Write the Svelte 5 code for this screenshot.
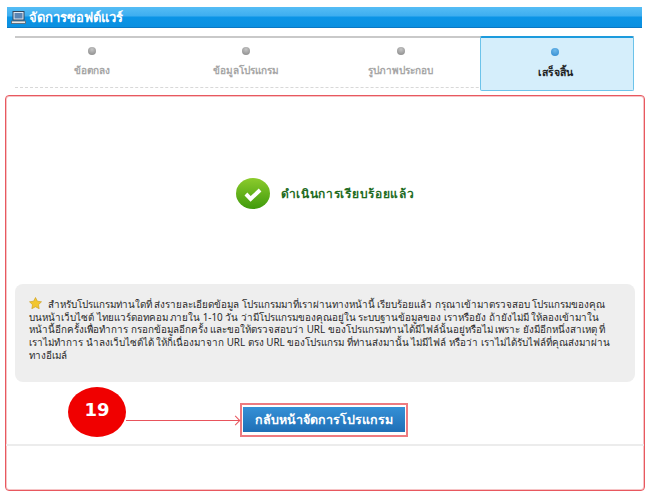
<script>
  const steps = [
    { label: 'ข้อตกลง' },
    { label: 'ข้อมูลโปรแกรม' },
    { label: 'รูปภาพประกอบ' },
    { label: 'เสร็จสิ้น', active: true }
  ];

  const lines = [
    'บนหน้าเว็บไซต์ ไทยแวร์ดอทคอม ภายใน 1-10 วัน ว่ามีโปรแกรมของคุณอยู่ใน ระบบฐานข้อมูลของ เราหรือยัง ถ้ายังไม่มี ให้ลองเข้ามาใน',
    'หน้านี้อีกครั้งเพื่อทำการ กรอกข้อมูลอีกครั้ง และขอให้ตรวจสอบว่า URL ของโปรแกรมท่านได้มีไฟล์นั้นอยู่หรือไม่ เพราะ ยังมีอีกหนึ่งสาเหตุ ที่',
    'เราไม่ทำการ นำลงเว็บไซต์ได้ ให้ก็เนื่องมาจาก URL ตรง URL ของโปรแกรม ที่ท่านส่งมานั้น ไม่มีไฟล์ หรือว่า เราไม่ได้รับไฟล์ที่คุณส่งมาผ่าน',
    'ทางอีเมล์'
  ];
</script>

<main>
  <header class="title">
    <svg width="15" height="13" viewBox="0 0 15 13">
      <rect x="2" y="0.5" width="11" height="8.5" fill="#dfe8f2" stroke="#33475e" />
      <rect x="3.5" y="2" width="8" height="5.5" fill="#5b86b5" />
      <rect x="0.5" y="10" width="14" height="2.5" fill="#e8e8e8" stroke="#55606c" stroke-width="0.8" />
    </svg>
    <span>จัดการซอฟต์แวร์</span>
  </header>

  <nav class="steps">
    {#each steps as step}
      <div class="step" class:active={step.active}>
        <i class="dot"></i>
        <span>{step.label}</span>
      </div>
    {/each}
  </nav>

  <section class="result">
    <div class="done">
      <svg width="34" height="31" viewBox="0 0 36 32" preserveAspectRatio="none">
        <defs>
          <linearGradient id="ok" x1="0" y1="0" x2="0" y2="1">
            <stop offset="0" stop-color="#8ccb2c" />
            <stop offset="1" stop-color="#3f9a0c" />
          </linearGradient>
        </defs>
        <ellipse cx="18" cy="16" rx="18" ry="16" fill="url(#ok)" />
        <path d="M10.5 16.5l5 5 10-9" fill="none" stroke="#fff" stroke-width="4.2" />
      </svg>
      <strong>ดำเนินการเรียบร้อยแล้ว</strong>
    </div>

    <div class="note">
      <p class="first">
        <svg width="13" height="12" viewBox="0 0 13 12">
          <path d="M6.5 0.5l1.9 3.7 4.1.6-3 2.9.7 4-3.7-1.9-3.7 1.9.7-4-3-2.9 4.1-.6z" fill="#f2c62f" stroke="#c99a1a" stroke-width="0.6" />
        </svg>
        สำหรับโปรแกรมท่านใดที่ ส่งรายละเอียดข้อมูล โปรแกรมมาที่เราผ่านทางหน้านี้ เรียบร้อยแล้ว กรุณาเข้ามาตรวจสอบ โปรแกรมของคุณ
      </p>
      {#each lines as line}
        <p>{line}</p>
      {/each}
    </div>

    <div class="actions">
      <div class="badge">19</div>
      <div class="arrow"></div>
      <div class="outline">
        <button>กลับหน้าจัดการโปรแกรม</button>
      </div>
    </div>
  </section>
</main>

<style>
  :global(body) {
    margin: 0;
    background: #fff;
  }

  main {
    width: 650px;
    height: 495px;
    box-sizing: border-box;
    padding-top: 7px;
    font-family: Tahoma, "Noto Sans", "DejaVu Sans", "Liberation Sans", sans-serif;
    overflow: hidden;
  }

  .title {
    margin: 0 8px 0 7px;
    height: 21px;
    display: flex;
    align-items: center;
    gap: 3px;
    padding-left: 4px;
    background: linear-gradient(#55bdf5 0, #3eaef0 45%, #0b94e6 50%, #0a8fe0 100%);
    border-bottom: 1px solid #0a78c4;
    box-sizing: border-box;
    color: #fff;
    font-size: 13px;
    font-weight: bold;
  }

  .steps {
    display: grid;
    grid-template-columns: 154px 154px 157px 154px;
    margin: 8px 16px 0 15px;
    height: 50px;
    border-top: 2px solid #c9c9c9;
    position: relative;
  }

  .steps::after {
    content: '';
    position: absolute;
    left: 0;
    right: 0;
    bottom: 0;
    border-bottom: 1px dashed #d8d8d8;
  }

  .step {
    display: flex;
    flex-direction: column;
    align-items: center;
    gap: 8px;
    padding-top: 9px;
    font-size: 10px;
    font-weight: bold;
    color: #a6a6a6;
    box-sizing: border-box;
  }

  .step:nth-child(3) {
    padding-right: 2px;
  }

  .dot {
    width: 8px;
    height: 8px;
    border-radius: 50%;
    background: radial-gradient(circle at 50% 30%, #c5c5c5, #858585);
  }

  .step.active {
    margin-top: -2px;
    height: 55px;
    padding: 10px 4px 0 0;
    background: #d5eefb;
    border: 1px solid #6cc3ea;
    border-top: 2px solid #1c9bdd;
    border-radius: 2px;
    color: #222;
    font-size: 10.5px;
    position: relative;
    z-index: 1;
  }

  .step.active .dot {
    background: radial-gradient(circle at 50% 30%, #6db8ea, #2d88cf);
  }

  .result {
    margin: 7px 5px 0;
    height: 396px;
    box-sizing: border-box;
    border: 1px solid #e8585f;
    box-shadow: inset 0 0 0 1px #f6c4c6;
    border-radius: 4px;
    padding: 0 9px;
    display: flex;
    flex-direction: column;
  }

  .done {
    display: flex;
    align-items: center;
    justify-content: center;
    gap: 11px;
    height: 188px;
    padding-top: 7px;
    box-sizing: border-box;
    color: #1e6b1e;
    font-size: 12px;
    letter-spacing: 0.7px;
  }

  .note {
    height: 98px;
    box-sizing: border-box;
    padding: 13px 14px;
    background: #eeeeee;
    border-radius: 8px;
    font-size: 9.85px;
    line-height: 12.7px;
    color: #2a2a2a;
  }

  .note p {
    margin: 0;
    white-space: nowrap;
  }

  .note .first svg {
    margin-right: 3px;
    vertical-align: -1px;
  }

  .actions {
    position: relative;
    height: 62px;
    border-bottom: 2px solid #ececec;
    margin: 0 -9px;
    display: flex;
    justify-content: center;
    align-items: flex-start;
  }

  .badge {
    position: absolute;
    left: 62px;
    top: 5px;
    width: 58px;
    height: 50px;
    border-radius: 50%;
    background: #f00000;
    color: #fff;
    font: bold 18px/46px "DejaVu Sans", sans-serif;
    text-align: center;
  }

  .arrow {
    position: absolute;
    left: 120px;
    top: 38px;
    width: 114px;
    border-top: 1px solid #e8545c;
  }

  .arrow::after {
    content: '';
    position: absolute;
    right: 1px;
    top: -4px;
    width: 6px;
    height: 6px;
    border-top: 1px solid #e8545c;
    border-right: 1px solid #e8545c;
    transform: rotate(45deg);
  }

  .outline {
    margin: 21px 0 0 -2px;
    padding: 2px 1px 3px;
    border: 2px solid #ee7b80;
  }

  button {
    display: block;
    width: 162px;
    height: 25px;
    padding: 0;
    border: 0;
    background: linear-gradient(#3590d6, #1f6fb6);
    color: #fff;
    font: bold 12.5px Tahoma, "Noto Sans", "DejaVu Sans", sans-serif;
  }
</style>
